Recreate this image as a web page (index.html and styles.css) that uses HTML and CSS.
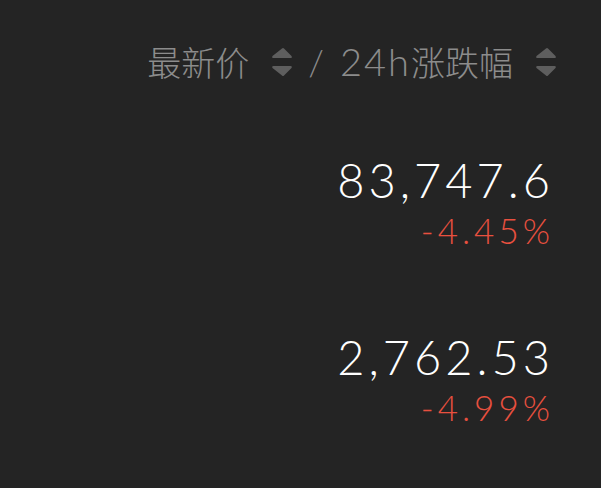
FILE: index.html
```html
<!DOCTYPE html>
<html lang="zh-CN">
<head>
  <meta charset="UTF-8" />
  <meta name="viewport" content="width=device-width, initial-scale=1.0"/>
  <title>行情</title>
  <link rel="stylesheet" href="styles.css">
</head>
<body>
  <div class="market">
    <!-- 表头：排序 -->
    <div class="head">
      <span class="label">最新价</span>
      <svg class="arrows" viewBox="0 0 22 30" width="22" height="30">
        <path d="M11 1.5 Q12 0.5 13 1.5 L20.5 9 Q21.5 11 19.5 11 L2.5 11 Q0.5 11 1.5 9 Z" />
        <path d="M11 28.5 Q12 29.5 13 28.5 L20.5 21 Q21.5 19 19.5 19 L2.5 19 Q0.5 19 1.5 21 Z" />
      </svg>
      <span class="slash">/</span>
      <span class="label"><span class="latin">24h</span>涨跌幅</span>
      <svg class="arrows" viewBox="0 0 22 30" width="22" height="30">
        <path d="M11 1.5 Q12 0.5 13 1.5 L20.5 9 Q21.5 11 19.5 11 L2.5 11 Q0.5 11 1.5 9 Z" />
        <path d="M11 28.5 Q12 29.5 13 28.5 L20.5 21 Q21.5 19 19.5 19 L2.5 19 Q0.5 19 1.5 21 Z" />
      </svg>
    </div>

    <!-- 行情列表 -->
    <div class="row">
      <div class="price">83,747.6</div>
      <div class="change down">-4.45%</div>
    </div>
    <div class="row">
      <div class="price">2,762.53</div>
      <div class="change down">-4.99%</div>
    </div>
  </div>
</body>
</html>
```

FILE: styles.css
```css
body {
  margin: 0;
  background: #242424;
  font-family: "Noto Sans CJK SC", sans-serif;
  height: 100vh;
  overflow: hidden;
}

.market {
  display: flex;
  flex-direction: column;
  align-items: flex-end;
  padding: 40px 44px 0 0;
}

.head {
  display: flex;
  align-items: center;
  color: #8c8c8c;
  font-size: 34px;
  font-weight: 300;
  line-height: 42px;
}

.head .label + .arrows {
  margin-left: 22px;
}

.latin {
  font-family: "Lato", sans-serif;
  font-size: 38px;
  font-weight: 300;
  letter-spacing: 2px;
}

.arrows {
  fill: #5e5e5e;
}

.slash {
  font-family: "Lato", sans-serif;
  font-size: 36px;
  margin: 0 16px 0 15px;
}

.row {
  display: flex;
  flex-direction: column;
  align-items: flex-end;
  margin-top: 70px;
  margin-right: 3px;
}

.row + .row {
  margin-top: 80px;
}

.price {
  font-family: "Lato", sans-serif;
  font-weight: 300;
  font-size: 47px;
  letter-spacing: 4px;
  color: #ffffff;
  line-height: 54px;
}

.change {
  font-family: "Lato", sans-serif;
  font-weight: 300;
  font-size: 35px;
  letter-spacing: 4px;
  line-height: 40px;
  margin-top: 3px;
}

.down {
  color: #e8503f;
}
```
